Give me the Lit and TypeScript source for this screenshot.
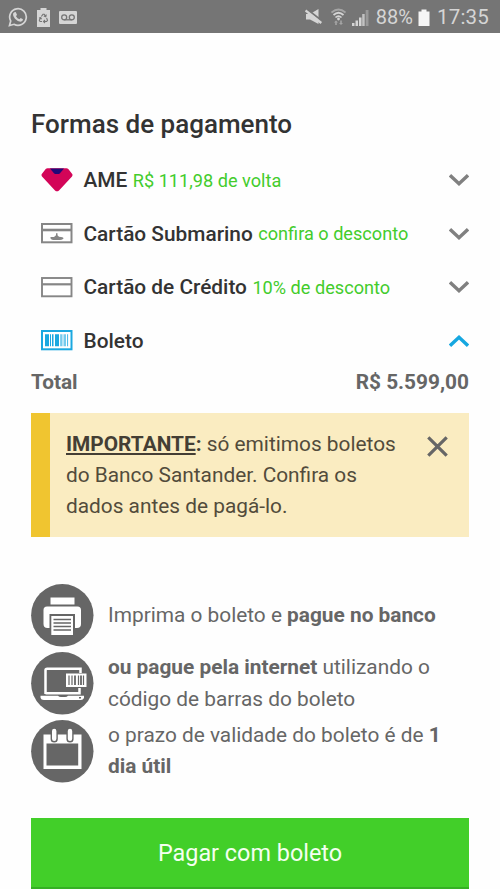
import { LitElement, html, svg, css, TemplateResult } from "lit";
import { customElement } from "lit/decorators.js";

const chevron = (open: boolean) => html`
  <svg class="chevron ${open ? "open" : ""}" width="20" height="12" viewBox="0 0 20 12">
    <path d=${open ? "M1 10.7 10 2.3 19 10.7" : "M1 1.3 10 9.7 19 1.3"} fill="none" stroke="currentColor" stroke-width="3.4" />
  </svg>`;

const ameIcon = html`<svg width="32" height="24" viewBox="0 0 32 24">
  <path d="M6.5 .3H25.500Q26.500 .3 27.300 1L31 5.800Q32 7 31 8.400L18 22.400Q16 24.300 14 22.400L1 8.400Q0 7 1 5.800L4.700 1Q5.500 .3 6.500 .3Z" fill="#d30558" />
  <path d="M9 .5H23L18.800 5.500Q18.300 5.900 17.700 5.900H14.300Q13.700 5.900 13.200 5.500Z" fill="#220878" />
</svg>`;

const submarinoIcon = html`<svg width="32" height="21" viewBox="0 0 32 21">
  <rect x="1" y="1" width="29.500" height="18.300" fill="#fff" stroke="#868686" stroke-width="2" />
  <path d="M1 7H31" stroke="#868686" stroke-width="2.600" />
  <path d="M9.500 14H13L15 12.300V10.300H16.500V12.300L18 13.800Q22.500 14 22.500 15.300T19 16.900H12Q9.500 16.700 9.500 15.300Z" fill="#868686" />
</svg>`;

const cardIcon = html`<svg width="32" height="21" viewBox="0 0 32 21">
  <rect x="1" y="1" width="29.500" height="18.300" fill="#fff" stroke="#868686" stroke-width="1.900" />
  <path d="M1 7.300H31" stroke="#868686" stroke-width="2.200" />
</svg>`;

const boletoIcon = html`<svg width="32" height="21" viewBox="0 0 32 21">
  <rect x="1" y="1" width="29.500" height="18.300" fill="#fff" stroke="#1ba8e0" stroke-width="2" />
  <path d="M4 4.200H8V16.200H4ZM9 4.200H10V16.200H9ZM11 4.200H12.500V16.200H11ZM14 4.200H18V16.200H14Z" fill="#1ba8e0" />
  <path d="M19.300 4.200H20.800V16.200H19.300ZM21.600 4.200H22.400V16.200H21.600ZM23.200 4.200H24.800V16.200H23.200ZM26 4.200H27.100V16.200H26Z" fill="#1ba8e0" opacity=".75" />
</svg>`;

interface Method {
  icon: TemplateResult;
  name: string;
  note?: string;
  open?: boolean;
  cls: string;
}

const METHODS: Method[] = [
  { icon: ameIcon, name: "AME", note: "R$ 111,98 de volta", cls: "ame" },
  { icon: submarinoIcon, name: "Cartão Submarino", note: "confira o desconto", cls: "submarino" },
  { icon: cardIcon, name: "Cartão de Crédito", note: "10% de desconto", cls: "credito" },
  { icon: boletoIcon, name: "Boleto", open: true, cls: "boleto" },
];

const disc = (content: unknown) => html`
  <svg class="disc" width="63" height="63" viewBox="0 0 63 63">
    <circle cx="31.300" cy="31.300" r="31.200" fill="#666" />${content}
  </svg>`;

const printer = svg`
  <path d="M19.500 13.500H43.500V20.500H19.500Z" fill="#fff" />
  <path d="M16 22.500H46.500Q50 22.500 50 26V40Q50 44 46 44H44V30H18.500V44H16.500Q12.500 44 12.500 40V26Q12.500 22.500 16 22.500Z" fill="#fff" />
  <path d="M20.300 32H42V51H20.300Z" fill="#fff" />
  <path d="M22.500 35.500H40M22.500 39H40M22.500 42.500H40M22.500 46H40" stroke="#666" stroke-width="1.300" />`;

const laptop = svg`
  <path d="M14.500 42V18.300Q14.500 16.700 16.200 16.700H49.500V21M14.500 41.300H48.500V36" fill="none" stroke="#fff" stroke-width="2.500" />
  <path d="M35 21.500H55.500V35H35Z" fill="#fff" />
  <path d="M38 23.500V33M41 23.500V33M47.500 23.500V33M52.500 23.500V33" stroke="#666" stroke-width="1.200" />
  <path d="M44 23.500V33M50 23.500V33" stroke="#666" stroke-width="1.800" />
  <path d="M9.500 43.800H27Q28 45 30 45H34Q36 45 37 43.800H53V46Q52 48 50 48H13Q10 48 9.500 45.500Z" fill="#fff" />
  <path d="M48 45.800H50" stroke="#666" stroke-width="1.500" />`;

const calendar = svg`
  <path d="M12.500 14.500H50.500V49H12.500Z" fill="#fff" />
  <path d="M15.500 23.500H47.200V45.500H15.500Z" fill="#666" />
  <path d="M23.200 11.500V19M39 11.500V19" stroke="#666" stroke-width="7.200" stroke-linecap="round" />
  <path d="M23.200 11V18.800M39 11V18.800" stroke="#fff" stroke-width="4.400" stroke-linecap="round" />`;

@customElement("app-root")
export class AppRoot extends LitElement {
  static styles = css`
    :host {
      display: block;
      height: 889px;
      overflow: hidden;
      background: #fefefe;
      font-family: Roboto, sans-serif;
      color: #666;
    }
    svg { display: block; flex: none; }
    .status {
      height: 33px;
      box-sizing: border-box;
      background: #757575;
      color: #d5d5d5;
      display: flex;
      align-items: center;
      justify-content: space-between;
      padding: 1px 11px 0 8px;
    }
    .group { display: flex; align-items: center; }
    .left { gap: 9px; }
    .pct { font-size: 20px; line-height: 24px; margin-left: 7px; }
    .battery { margin: 0 7px 0 5px; }
    .clock { font-size: 20.500px; line-height: 24px; letter-spacing: 0.200px; }
    .signal { margin-left: 6px; }
    .wifi { margin-left: 9px; }
    main { padding: 75.400px 31px 0; }
    h1 {
      margin: 0 0 12px;
      font-size: 26px;
      line-height: 33px;
      font-weight: 500;
      color: #333;
      white-space: nowrap;
    }
    .method {
      height: 53.500px;
      display: flex;
      align-items: center;
      padding: 0 0.500px 0 10px;
    }
    .name {
      margin-left: 10.500px;
      font-size: 20.830px;
      font-weight: 500;
      color: #333;
      white-space: nowrap;
    }
    .note { margin-left: 5.500px; font-size: 18.150px; color: #43cc2c; white-space: nowrap; }
    .chevron { margin-left: auto; color: #808080; }
    .chevron.open { color: #16a7e0; }
    .total {
      display: flex;
      justify-content: space-between;
      font-size: 20.830px;
      line-height: 31px;
      font-weight: 700;
      margin-bottom: 14.600px;
    }
    .alert {
      display: flex;
      height: 124px;
      box-sizing: border-box;
      background: #faecc1;
      border-left: 19px solid #f0c530;
      padding: 15.700px 21px 0 16px;
      justify-content: space-between;
      color: #524b3b;
      font-size: 20.830px;
      line-height: 31.250px;
      white-space: nowrap;
    }
    .alert b { color: #443e34; }
    .alert u { text-decoration-thickness: 2px; text-underline-offset: 2px; }
    .close { margin-top: 7.300px; }
    .steps { margin-top: 47.500px; display: grid; gap: 4.700px; }
    .step {
      display: flex;
      align-items: center;
      gap: 14px;
      height: 63px;
      font-size: 20.830px;
      line-height: 31.250px;
      white-space: nowrap;
    }
    .pay {
      display: block;
      width: 100%;
      height: 71px;
      margin-top: 35.100px;
      padding: 1px 0 0;
      border: 0;
      border-bottom: 2px solid #35b023;
      background: #42cf29;
      color: #f4fff0;
      font: 400 23.400px/68px Roboto, sans-serif;
    }
  `;

  render() {
    return html`
      <div class="status">
        <div class="group left">
          <svg width="20" height="20" viewBox="0 0 20 20">
            <path d="M1.500 18.500 2.700 14A8.300 8.300 0 1 1 6 17.300Z" fill="none" stroke="#d5d5d5" stroke-width="1.700" />
            <path d="M6.300 5.200 7.700 5 9 7.800 8 9.200Q9.200 11.500 11.500 12.300L12.700 11 15 12.300Q15 14.700 12.500 14.800 9.500 14.600 7 11.800 4.700 9.200 5 7 5.300 5.800 6.300 5.200Z" fill="#d5d5d5" />
          </svg>
          <svg width="13" height="19" viewBox="0 0 13 19">
            <path d="M0 2H3.500V0H9.500V2H13V19H0Z" fill="#d5d5d5" />
            <path d="M4.300 8.500 6 6.300H7.300L8.700 8.500M9.600 10 10.500 12.300 9.600 13.500H7M5 13.500H3L2.300 12.300 3.500 10M9.300 6.500 8.800 8.800 6.800 8M8 12 6.500 13.500 8 15M2 10 3.700 9.700 4.500 11.300" fill="none" stroke="#757575" stroke-width="1.100" />
          </svg>
          <svg width="18" height="13" viewBox="0 0 18 13">
            <rect width="18" height="13" rx="1" fill="#d5d5d5" />
            <path d="M5.200 8.800H12.800" stroke="#757575" stroke-width="1.300" />
            <circle cx="5.200" cy="6.300" r="2.500" fill="none" stroke="#757575" stroke-width="1.300" />
            <circle cx="12.800" cy="6.300" r="2.500" fill="none" stroke="#757575" stroke-width="1.300" />
          </svg>
        </div>
        <div class="group">
          <svg width="17" height="16" viewBox="0 0 17 16">
            <path d="M1 5H5L13.500 0V15L5 10.500H1Z" fill="#d5d5d5" />
            <path d="M1 -0.500 17 12" stroke="#757575" stroke-width="2" />
            <path d="M0.500 1.500 16.300 14" stroke="#d5d5d5" stroke-width="2.300" />
          </svg>
          <svg class="wifi" width="15" height="18" viewBox="0 0 15 18">
            <path d="M0.500 4.500Q7.500-1.500 14.500 4.500" fill="none" stroke="#a5a5a5" stroke-width="1.700" />
            <path d="M2.500 7Q7.500 2.500 12.500 7M4.500 9.500Q7.500 6.700 10.500 9.500" fill="none" stroke="#d5d5d5" stroke-width="1.700" />
            <circle cx="7.500" cy="11" r="1.400" fill="#d5d5d5" />
            <path d="M3 14.500 5 12.500 7 14.500H5.800V17H4.200V14.500ZM8 15 10 17 12 15H10.800V12.500H9.200V15Z" fill="#a5a5a5" />
          </svg>
          <svg class="signal" width="17" height="17" viewBox="0 0 17 17">
            <path d="M0 14H2.500V17H0ZM3.500 11.500H6V17H3.500ZM7 8.500H9.500V17H7Z" fill="#d5d5d5" />
            <path d="M10.200 5H12.700V17H10.200Z" fill="#c2c2c2" />
            <path d="M13.700 1H16.500V17H13.700Z" fill="#999" />
          </svg>
          <span class="pct">88%</span>
          <svg class="battery" width="12" height="17" viewBox="0 0 12 17">
            <path d="M0.500 2.500H3.500V0.500H8.500V2.500H11.500V17H0.500Z" fill="#f5f5f5" />
          </svg>
          <span class="clock">17:35</span>
        </div>
      </div>
      <main>
        <h1>Formas de pagamento</h1>
        ${METHODS.map(
          (m) => html`<div class="method ${m.cls}">
            ${m.icon}<span class="name">${m.name}</span>
            ${m.note ? html`<span class="note">${m.note}</span>` : null}
            ${chevron(!!m.open)}
          </div>`
        )}
        <div class="total"><span>Total</span><span class="price">R$ 5.599,00</span></div>
        <div class="alert">
          <div><b><u>IMPORTANTE</u>:</b> só emitimos boletos<br />do Banco Santander. Confira os<br />dados antes de pagá-lo.</div>
          <svg class="close" width="21" height="21" viewBox="0 0 21 21">
            <path d="M1.300 1.300 19.700 19.700M19.700 1.300 1.300 19.700" stroke="#666" stroke-width="3.200" />
          </svg>
        </div>
        <div class="steps">
          <div class="step">${disc(printer)}<div>Imprima o boleto e <b>pague no banco</b></div></div>
          <div class="step">${disc(laptop)}<div><b>ou pague pela internet</b> utilizando o<br />código de barras do boleto</div></div>
          <div class="step">${disc(calendar)}<div>o prazo de validade do boleto é de <b>1<br />dia útil</b></div></div>
        </div>
        <button class="pay">Pagar com boleto</button>
      </main>
    `;
  }
}
